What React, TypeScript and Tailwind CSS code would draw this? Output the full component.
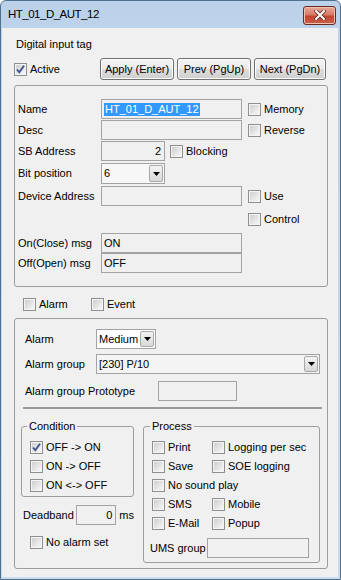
import clsx from "clsx";
import type { ReactNode } from "react";

const Check = ({ checked = false }: { checked?: boolean }) => (
  <span className="relative block h-[13px] w-[13px] shrink-0 border border-[#8e8f8f] bg-[#f4f4f4] p-[1px]">
    <span className="block h-full w-full bg-linear-to-br from-[#cfcfcf] to-[#f7f7f7]" />
    {checked && (
      <svg className="absolute left-0 top-0" width="11" height="11" viewBox="0 0 11 11">
        <path d="M2 5.5 L4.3 8.3 L9 1.8" fill="none" stroke="#3f5592" strokeWidth="1.9" />
      </svg>
    )}
  </span>
);

const CheckItem = ({
  label,
  checked,
  className,
}: {
  label: string;
  checked?: boolean;
  className?: string;
}) => (
  <div className={clsx("flex items-center gap-[3px]", className)}>
    <Check checked={checked} />
    <span className="whitespace-nowrap">{label}</span>
  </div>
);

const TextBox = ({ className, children }: { className?: string; children?: ReactNode }) => (
  <div
    className={clsx(
      "flex h-[20px] shrink-0 items-center border border-[#a3a3a3] bg-[#f0f0f0] px-[2px]",
      className
    )}
  >
    {children}
  </div>
);

const DropBtn = () => (
  <div className="m-[1px] flex w-[14px] items-center justify-center rounded-[2px] border border-[#a9a9a9] bg-linear-to-b from-[#f3f3f3] to-[#d8d8d8]">
    <svg width="7" height="4" viewBox="0 0 7 4">
      <path d="M0 0h7L3.5 4z" fill="#000" />
    </svg>
  </div>
);

const Combo = ({ value, className }: { value: string; className?: string }) => (
  <div className={clsx("flex h-[20px] shrink-0 border border-[#a3a3a3]", className)}>
    <div className="flex flex-1 items-center pl-[2px]">{value}</div>
    <DropBtn />
  </div>
);

const WinButton = ({ label, className }: { label: string; className?: string }) => (
  <div
    className={clsx(
      "flex h-[22px] items-center justify-center rounded-[3px] border border-[#707070] bg-[linear-gradient(#f2f2f2_0%,#ebebeb_49%,#dddddd_50%,#cfcfcf_100%)] shadow-[inset_0_0_0_1px_#fcfcfc]",
      className
    )}
  >
    {label}
  </div>
);

const Row = ({ label, width, children, className }: { label: string; width: string; children: ReactNode; className?: string }) => (
  <div className={clsx("flex h-[20px] items-center", className)}>
    <span className={clsx("shrink-0 whitespace-nowrap", width)}>{label}</span>
    {children}
  </div>
);

export default function App() {
  return (
    <div className="flex h-[580px] w-[341px] flex-col overflow-hidden rounded-t-[6px] border border-[#50708f] bg-linear-to-b from-[#bcd2ea] to-[#c9dcf0] font-['Liberation_Sans',Arial,sans-serif] text-[11px] leading-[13px] text-black">
      {/* title bar */}
      <div className="flex h-[27px] shrink-0 items-center justify-between pl-[7px] pr-[4px]">
        <span className="text-[11.5px] tracking-[-0.5px] text-black">HT_01_D_AUT_12</span>
        <div className="mt-[1px] flex h-[19px] w-[33px] items-center justify-center rounded-[3px] border border-[#6b2a22] bg-[linear-gradient(#e9a99a_0%,#d77a68_45%,#c2452f_55%,#c9604a_100%)] shadow-[inset_0_0_0_1px_#f0c0b0]">
          <svg width="12" height="10" viewBox="0 0 12 10">
            <path d="M2 1 L10 9 M10 1 L2 9" stroke="#5a2a22" strokeWidth="3.6" strokeLinecap="square" />
            <path d="M2 1 L10 9 M10 1 L2 9" stroke="#ffffff" strokeWidth="2" strokeLinecap="square" />
          </svg>
        </div>
      </div>

      {/* client area */}
      <div className="ml-[1px] mr-[2px] mb-[2px] flex-1 bg-[#f0f0f0] pl-[12px] pr-[10px] pt-[10px]">
        <div className="ml-[2px] h-[14px]">Digital input tag</div>

        <div className="mt-[6px] flex h-[22px] items-center">
          <CheckItem label="Active" checked />
          <div className="ml-auto mr-[2px] flex gap-[3px]">
            <WinButton label="Apply (Enter)" className="w-[74px]" />
            <WinButton label="Prev (PgUp)" className="w-[74px]" />
            <WinButton label="Next (PgDn)" className="w-[72px]" />
          </div>
        </div>

        {/* tag group */}
        <div className="mt-[5px] rounded-[3px] border border-[#9d9d9d] pb-[13px] pl-[3px] pt-[13px]">
          <Row label="Name" width="w-[83px]">
            <TextBox className="w-[141px] px-[1px]">
              <span className="bg-[#3399ff] px-[1px] text-white">HT_01_D_AUT_12</span>
            </TextBox>
            <CheckItem label="Memory" className="ml-[6px]" />
          </Row>
          <Row label="Desc" width="w-[83px]" className="mt-[1px]">
            <TextBox className="w-[141px]" />
            <CheckItem label="Reverse" className="ml-[6px]" />
          </Row>
          <Row label="SB Address" width="w-[83px]" className="mt-[1px]">
            <TextBox className="w-[64px] justify-end pr-[3px]">2</TextBox>
            <CheckItem label="Blocking" className="ml-[5px]" />
          </Row>
          <Row label="Bit position" width="w-[83px]" className="mt-[2px] h-[21px]">
            <Combo value="6" className="h-[21px] w-[64px] bg-[#f7f7f7]" />
          </Row>
          <Row label="Device Address" width="w-[83px]" className="mt-[2px]">
            <TextBox className="w-[141px]" />
            <CheckItem label="Use" className="ml-[6px]" />
          </Row>
          <div className="mt-[3px] flex h-[20px] items-center pl-[230px]">
            <CheckItem label="Control" />
          </div>
          <Row label="On(Close) msg" width="w-[83px]" className="mt-[4px]">
            <TextBox className="w-[141px] px-[1px]">ON</TextBox>
          </Row>
          <Row label="Off(Open) msg" width="w-[83px]">
            <TextBox className="w-[141px] px-[1px]">OFF</TextBox>
          </Row>
        </div>

        <div className="ml-[9px] mt-[11px] flex h-[13px] items-center">
          <CheckItem label="Alarm" className="w-[68px]" />
          <CheckItem label="Event" />
        </div>

        {/* alarm group */}
        <div className="mt-[7px] rounded-[3px] border border-[#9d9d9d] pb-[5px] pl-[6px] pt-[10px]">
          <Row label="Alarm" width="ml-[4px] w-[71px]">
            <Combo value="Medium" className="w-[60px] bg-white" />
          </Row>
          <Row label="Alarm group" width="ml-[4px] w-[71px]" className="mt-[5px]">
            <Combo value="[230] P/10" className="w-[224px] bg-[#f4f4f4]" />
          </Row>
          <Row label="Alarm group Prototype" width="ml-[4px] w-[133px]" className="mt-[7px]">
            <TextBox className="w-[79px]" />
          </Row>
          <div className="ml-[2px] mt-[6px] h-[2px] w-[299px] bg-[#9a9a9a]" />

          <div className="mt-[17px] flex items-start">
            <div className="flex w-[113px] flex-col">
              <div className="relative h-[71px] rounded-[3px] border border-[#9d9d9d] pl-[8px] pt-[11px]">
                <span className="absolute left-[5px] top-[-7px] bg-[#f0f0f0] px-[2px]">Condition</span>
                <CheckItem label="OFF -> ON" checked className="h-[19px]" />
                <CheckItem label="ON -> OFF" className="h-[19px]" />
                <CheckItem label="ON <-> OFF" className="h-[19px]" />
              </div>
              <div className="mt-[8px] flex h-[20px] items-center">
                <span className="ml-[2px] w-[54px]">Deadband</span>
                <TextBox className="w-[40px] justify-end pr-[3px]">0</TextBox>
                <span className="ml-[3px]">ms</span>
              </div>
              <CheckItem label="No alarm set" className="ml-[9px] mt-[11px] h-[13px]" />
            </div>

            <div className="relative ml-[9px] h-[137px] w-[177px] rounded-[3px] border border-[#9d9d9d] pl-[8px] pt-[11px]">
              <span className="absolute left-[6px] top-[-7px] bg-[#f0f0f0] px-[2px]">Process</span>
              <div className="grid grid-cols-[60px_1fr]">
                <CheckItem label="Print" className="h-[19px]" />
                <CheckItem label="Logging per sec" className="h-[19px]" />
                <CheckItem label="Save" className="h-[19px]" />
                <CheckItem label="SOE logging" className="h-[19px]" />
                <CheckItem label="No sound play" className="col-span-2 h-[19px]" />
                <CheckItem label="SMS" className="h-[19px]" />
                <CheckItem label="Mobile" className="h-[19px]" />
                <CheckItem label="E-Mail" className="h-[19px]" />
                <CheckItem label="Popup" className="h-[19px]" />
              </div>
              <div className="-ml-[2px] mt-[5px] flex h-[20px] items-center">
                <span className="w-[57px]">UMS group</span>
                <TextBox className="w-[102px]" />
              </div>
            </div>
          </div>
        </div>
      </div>
    </div>
  );
}
